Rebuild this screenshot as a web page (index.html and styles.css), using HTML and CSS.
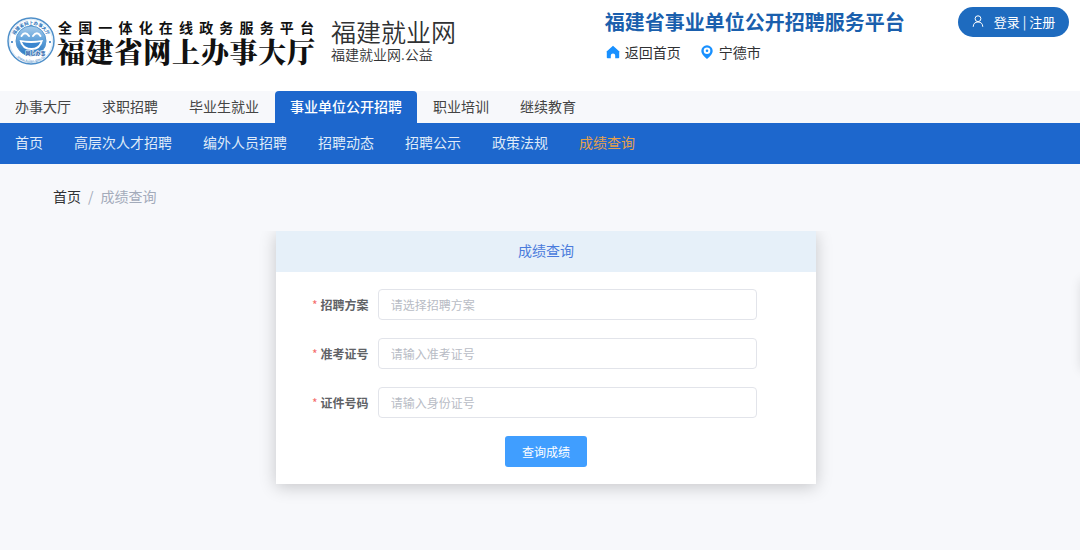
FILE: index.html
```html
<!DOCTYPE html>
<html lang="zh-CN">
<head>
<meta charset="utf-8">
<meta name="viewport" content="width=device-width, initial-scale=1">
<title>成绩查询</title>
<link rel="stylesheet" href="styles.css">
</head>
<body>
<header class="header">
  <div class="brand">
    <svg class="seal" viewBox="0 0 96 96" role="img" aria-label="网上办事">
      <defs>
        <linearGradient id="face" x1="0" y1="0" x2="0" y2="1"><stop offset="0" stop-color="#a9cdec"/><stop offset=".5" stop-color="#5c9fd9"/><stop offset="1" stop-color="#2a76c0"/></linearGradient>
        <path id="arc-top" d="M14 49a34 34 0 0 1 68 0"/>
        <path id="arc-bottom" d="M6 49a42 42 0 0 0 84 0"/>
      </defs>
      <circle cx="48" cy="48" r="46" fill="#fff" stroke="#4e8fc9" stroke-width="3"/>
      <circle cx="48" cy="48" r="43" fill="none" stroke="#b5d2ec" stroke-width="1"/>
      <circle cx="48" cy="48" r="30" fill="url(#face)" stroke="#5a98cf" stroke-width="2"/>
      <text class="seal-name"><textPath href="#arc-top" startOffset="50%">福建省网上办事大厅</textPath></text>
      <text class="seal-url"><textPath href="#arc-bottom" startOffset="50%">www.fujian.gov.cn</textPath></text>
      <circle cx="10" cy="50" r="2" fill="#2d75bb"/><circle cx="86" cy="50" r="2" fill="#2d75bb"/>
      <path d="M29 38q7-11 15 0M52 38q8-11 15 0" fill="none" stroke="#fff" stroke-width="4" stroke-linecap="round"/>
      <path d="M25 46q23 4 47 0q-4 20-23 20q-20 0-24-20z" fill="#fff"/>
      <path d="M30 50q18 4 37 0q-5 12-18 12q-14 0-19-12z" fill="#3a86cf"/>
      <text class="seal-tag" x="57" y="76">网上办事</text>
    </svg>
    <div class="hall">
      <div class="hall-top">全国一体化在线政务服务平台</div>
      <div class="hall-name">福建省网上办事大厅</div>
    </div>
    <div class="site">
      <div class="site-name">福建就业网</div>
      <div class="site-sub">福建就业网.公益</div>
    </div>
  </div>
  <div class="platform">
    <h1 class="platform-name">福建省事业单位公开招聘服务平台</h1>
    <div class="platform-links">
      <a class="icon-link" href="#">
        <svg class="icon" viewBox="0 0 14 14" aria-hidden="true"><path d="M7 .8 13.4 6.600q.4.5-.2.6H13.200V12.500q0 .8-.8.8H9.200V10.500Q9.200 8.600 7 8.600T4.800 10.500V13.300H1.600q-.8 0-.8-.8V7.200Q.2 7.100.6 6.600z" fill="#1890ff"/></svg>
        <span>返回首页</span>
      </a>
      <a class="icon-link" href="#">
        <svg class="icon" viewBox="0 0 14 14" aria-hidden="true"><path d="M7 .3a5.700 5.700 0 0 1 5.700 5.700Q12.700 9.500 7 13.900 1.300 9.500 1.300 6A5.700 5.700 0 0 1 7 .3z" fill="#1890ff"/><circle cx="7" cy="5.800" r="3.300" fill="#fff"/><circle cx="7" cy="5.800" r="1.300" fill="#1890ff"/></svg>
        <span>宁德市</span>
      </a>
    </div>
  </div>
  <button class="login" type="button">
    <svg class="login-icon" viewBox="0 0 12 12" aria-hidden="true"><circle cx="6" cy="3.700" r="2.900"/><path d="M1.200 11.800Q1.500 7 6 7T10.800 11.800"/></svg>
    <span>登录 | 注册</span>
  </button>
</header>
<nav class="tabs" aria-label="主导航">
  <a class="tab" href="#">办事大厅</a>
  <a class="tab" href="#">求职招聘</a>
  <a class="tab" href="#">毕业生就业</a>
  <a class="tab tab-active" href="#" aria-current="page">事业单位公开招聘</a>
  <a class="tab" href="#">职业培训</a>
  <a class="tab" href="#">继续教育</a>
</nav>
<nav class="subnav" aria-label="栏目导航">
  <a class="sublink" href="#">首页</a>
  <a class="sublink" href="#">高层次人才招聘</a>
  <a class="sublink" href="#">编外人员招聘</a>
  <a class="sublink" href="#">招聘动态</a>
  <a class="sublink" href="#">招聘公示</a>
  <a class="sublink" href="#">政策法规</a>
  <a class="sublink sublink-active" href="#" aria-current="page">成绩查询</a>
</nav>
<main class="content">
  <nav class="breadcrumb" aria-label="面包屑">
    <a class="crumb" href="#">首页</a><span>/</span><span class="crumb-current">成绩查询</span>
  </nav>
  <section class="card">
    <h2 class="card-title">成绩查询</h2>
    <form class="form">
      <div class="row">
        <label class="label" for="plan">招聘方案</label>
        <select class="field" id="plan" required><option value="">请选择招聘方案</option></select>
      </div>
      <div class="row">
        <label class="label" for="ticket">准考证号</label>
        <input class="field" id="ticket" type="text" placeholder="请输入准考证号">
      </div>
      <div class="row">
        <label class="label" for="idno">证件号码</label>
        <input class="field" id="idno" type="text" placeholder="请输入身份证号">
      </div>
      <button class="submit" type="button">查询成绩</button>
    </form>
  </section>
</main>
<div class="side-shadow" aria-hidden="true"></div>
</body>
</html>
```

FILE: styles.css
```css
* {
  box-sizing: border-box;
}

body {
  margin: 0;
  min-height: 100vh;
  background: #f7f8fb;
  color: #303133;
  font: 14px/20px "Noto Sans CJK SC", sans-serif;
  position: relative;
  overflow-x: hidden;
}

a {
  color: inherit;
  text-decoration: none;
  white-space: nowrap;
}

button,
input,
select {
  font-family: inherit;
}

.header {
  display: grid;
  grid-template-columns: 56% 1fr auto;
  align-items: start;
  padding-top: 7px;
  min-height: 91px;
  background: #fff;
}

.brand {
  display: flex;
  padding: 10px 0 0 7px;
  white-space: nowrap;
}

.seal {
  width: 48px;
  height: 48px;
  flex: none;
}

.seal-name,
.seal-url,
.seal-tag {
  fill: #2d75bb;
  text-anchor: middle;
}

.seal-name {
  font-size: 9px;
  font-weight: 700;
}

.seal-url {
  font-size: 7px;
}

.seal-tag {
  font-size: 10px;
  font-weight: 700;
  fill: #1559a5;
  stroke: #fff;
  stroke-width: 2px;
  paint-order: stroke;
}

.hall {
  width: 258px;
  margin-left: 2px;
  color: #111;
}

.hall-top {
  padding: 0 1px;
  font-size: 14px;
  line-height: 20px;
  font-weight: 700;
  text-align: justify;
  text-align-last: justify;
}

.hall-name {
  font-family: "Noto Serif CJK SC", "Noto Sans CJK SC", serif;
  font-size: 28px;
  line-height: 28px;
  font-weight: 900;
  text-align: justify;
  text-align-last: justify;
}

.site {
  margin-left: 16px;
}

.site-name {
  font-size: 25px;
  line-height: 28px;
  font-weight: 350;
}

.site-sub {
  font-size: 14px;
  line-height: 18px;
  font-weight: 350;
}

.platform-name {
  margin: 0;
  color: #1a5fad;
  font-size: 20px;
  line-height: 30px;
  font-weight: 700;
  white-space: nowrap;
}

.platform-links {
  display: flex;
  gap: 18px;
  margin-top: 5px;
}

.icon-link {
  display: flex;
  align-items: center;
  gap: 5px;
}

.icon {
  width: 14px;
  height: 14px;
  margin-left: 1px;
}

.login {
  display: flex;
  align-items: center;
  justify-content: center;
  gap: 10px;
  width: 111px;
  height: 30px;
  margin-right: 11px;
  padding: 0 0 2px;
  border: 0;
  border-radius: 15px;
  background: #1e6bbf;
  color: #fff;
  font-size: 13px;
  white-space: nowrap;
}

.login-icon {
  width: 12px;
  height: 12px;
  fill: none;
  stroke: #fff;
}

.tabs {
  display: flex;
  gap: 1px;
}

.tab {
  padding: 0 15px 2px;
  line-height: 30px;
  color: #444;
}

.tab-active {
  border-radius: 4px 4px 0 0;
  background: #1d67cd;
  color: #fff;
  font-weight: 500;
}

.subnav {
  display: flex;
  gap: 31px;
  padding: 0 15px 2px;
  background: #1d67cd;
  line-height: 39px;
  color: #dfeaf8;
}

.sublink-active {
  color: #e6a04b;
}

.content {
  padding: 22px 41px 40px 53px;
}

.breadcrumb {
  display: flex;
  gap: 7px;
  color: #a3abba;
}

.crumb {
  color: #303133;
}

.card {
  max-width: 540px;
  margin: 25px auto 0;
  background: #fff;
  box-shadow: 0 3px 16px rgba(0, 0, 0, 0.2);
  clip-path: inset(0 -30px -30px -30px);
}

.card-title {
  margin: 0;
  padding-bottom: 2px;
  background: #e6f0f9;
  color: #4a7bdc;
  font-size: 14px;
  line-height: 39px;
  font-weight: 400;
  text-align: center;
}

.form {
  display: flex;
  flex-direction: column;
  gap: 18px;
  padding: 17px 59px 17px 36px;
}

.row {
  display: flex;
  align-items: center;
  gap: 9px;
}

.label {
  flex: none;
  color: #606266;
  font-size: 12px;
  font-weight: 700;
}

.label::before {
  content: "*";
  margin-right: 3px;
  color: #f56c6c;
  font-weight: 400;
}

.field {
  flex: 1;
  min-width: 0;
  height: 31px;
  padding: 0 12px;
  border: 1px solid #e2e4ea;
  border-radius: 4px;
  appearance: none;
  background: #fff;
  color: #b8bcc5;
  font-size: 12px;
}

.field::placeholder {
  color: #b8bcc5;
}

.submit {
  align-self: center;
  height: 31px;
  margin-left: 23px;
  padding: 0 17px;
  border: 0;
  border-radius: 3px;
  background: #409eff;
  color: #fff;
  font-size: 12px;
}

.side-shadow {
  position: absolute;
  top: 280px;
  right: -12px;
  width: 10px;
  height: 90px;
  box-shadow: 0 0 12px rgba(0, 0, 0, 0.15);
}
```
